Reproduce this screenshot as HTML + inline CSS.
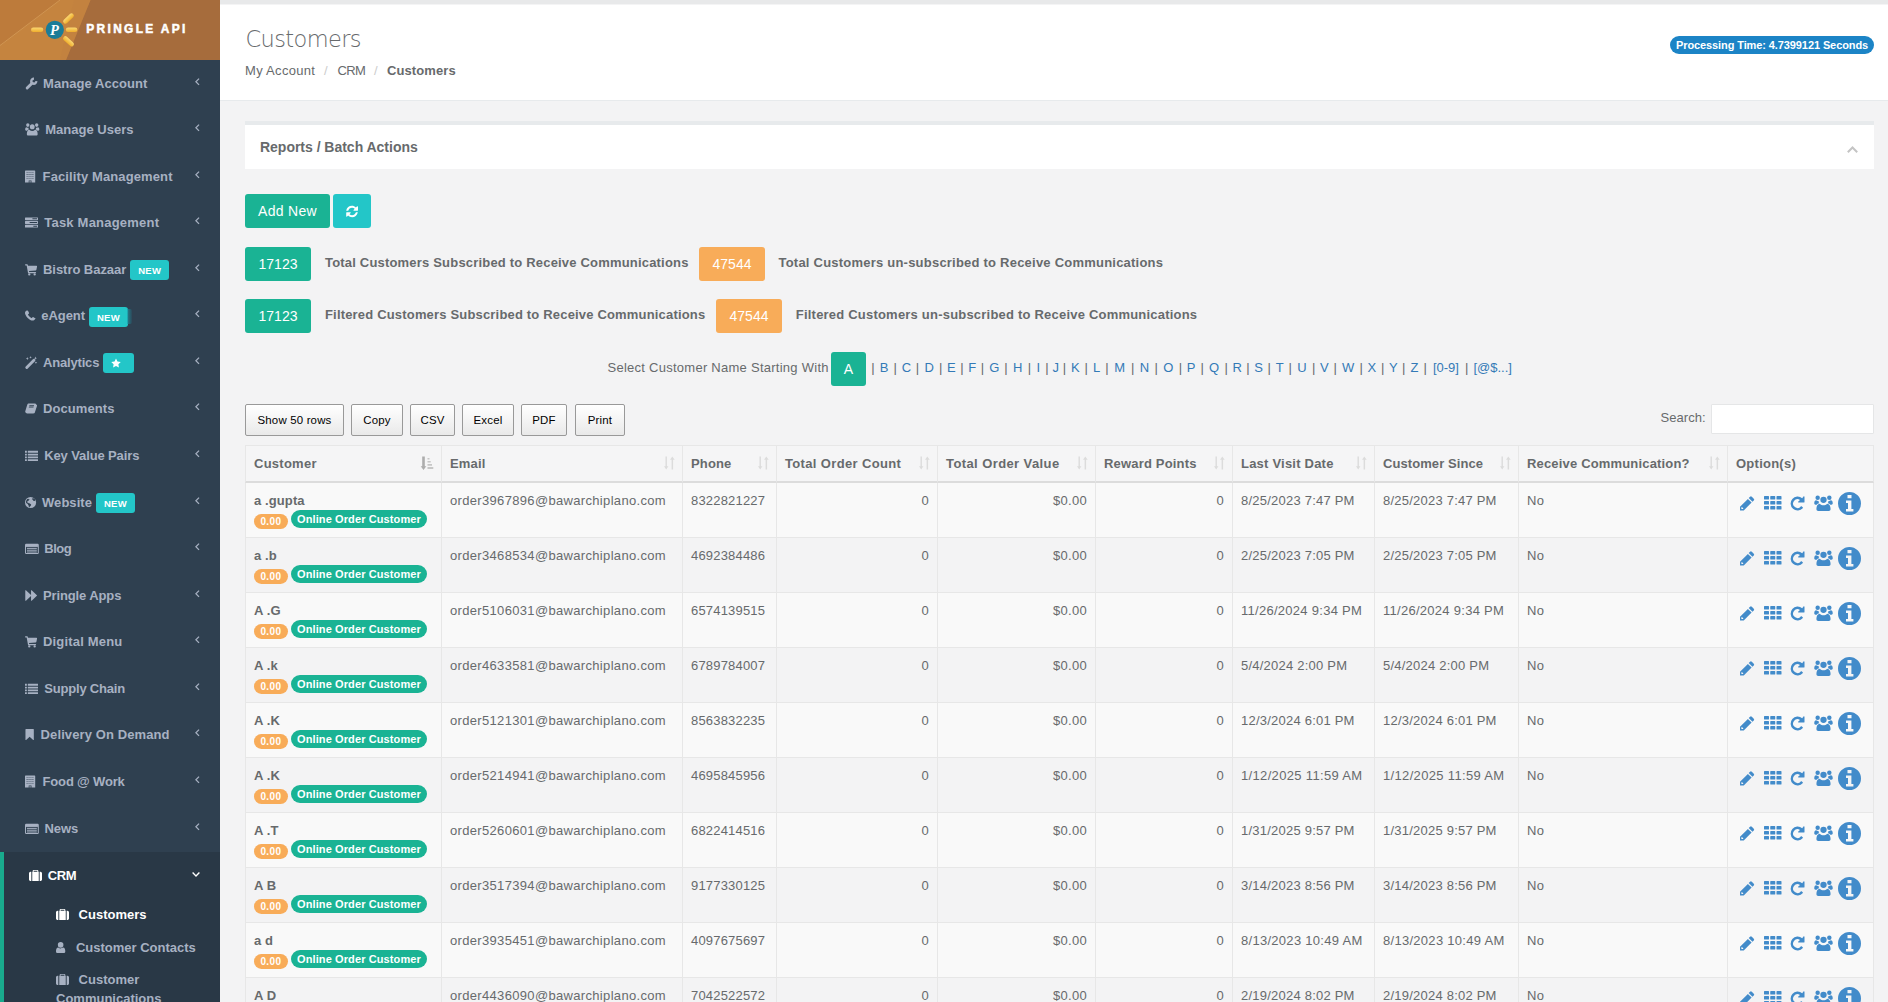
<!DOCTYPE html>
<html lang="en"><head><meta charset="utf-8"><title>Customers</title>
<style>
*{box-sizing:border-box}
html,body{margin:0;padding:0}
body{width:1888px;height:1002px;overflow:hidden;background:#f3f3f4;font:13px/18.5714px "Liberation Sans",sans-serif;color:#676a6c;position:relative}
svg{display:inline-block;fill:currentColor;overflow:visible}
a{text-decoration:none;color:inherit}
b,strong,th{font-weight:bold}
.abs{position:absolute}
/* sidebar */
#side{position:absolute;left:0;top:0;width:220px;height:1002px;background:#2f4050;overflow:hidden}
#logo{position:absolute;left:0;top:0;width:220px;height:60px;background:#a66c3c;overflow:hidden}
#logo .brand{-webkit-text-stroke:.5px #fff;position:absolute;left:86.3px;top:19.7px;font:bold 11.9px/18px "Liberation Sans",sans-serif;color:#fff;letter-spacing:2.34px;white-space:nowrap}
#nav{position:absolute;left:0;top:60px;width:220px;list-style:none;margin:0;padding:0}
#nav li{display:block;margin:0;padding:0}
#nav>li>a{display:block;height:46.5714px;padding:14.5px 20px 13.5px 25px;color:#a7b1c2;font-weight:bold;white-space:nowrap;letter-spacing:.05px}
#nav .ib{display:inline-block}
#nav .ic{height:13px;vertical-align:-2px}
#nav .arr{float:right;width:4.6px;height:7.4px;margin-top:3px;stroke:currentColor;fill:none;stroke-width:1.35}
#nav>li>a{position:relative}
#nav .lbl{position:absolute;top:14px;width:38.9px;text-align:center;background:#23c6c8;color:#fff;font:bold 9.5px/22px "Liberation Sans",sans-serif;height:19.8px;border-radius:3px;letter-spacing:.3px;text-indent:.3px;overflow:hidden}
#nav .gh{position:absolute;top:16.5px;width:4.5px;height:14.5px;border-radius:0 2px 2px 0;background:linear-gradient(90deg,rgba(30,150,165,.75),rgba(30,120,140,.15))}
#nav li.act{border-left:4px solid #19aa8d;background:#293846}
#nav li.act>a{color:#fff;padding-left:24.5px;padding-top:15.2px;padding-bottom:12.8px}
#nav ul{list-style:none;margin:0;padding:0}
#nav ul li a{display:block;padding:8.2px 10px 5.8px 52px;color:#a7b1c2;font-weight:bold}
#nav ul li.on a{color:#fff}
/* header */
#strip{position:absolute;left:220px;top:0;width:1668px;height:5px;background:linear-gradient(#e8e9ea 0,#e8e9ea 4px,#f4f4f5 4px)}
#head{position:absolute;left:220px;top:5px;width:1668px;height:96px;background:#fff;border-bottom:1px solid #e7eaec}
#head h2{position:absolute;left:25.5px;top:17.2px;margin:0;font:200 22.5px/34px "DejaVu Sans Light","DejaVu Sans","Liberation Sans",sans-serif;color:#676a6c;letter-spacing:-.62px}
#crumb{position:absolute;left:25px;top:57px;white-space:nowrap;line-height:18.5714px}
#crumb span{position:absolute;top:0}
#ptime{position:absolute;left:1670px;top:36px;width:204px;height:17.5px;border-radius:9px;background:#1c84c6;color:#fff;font:bold 11px/18.6px "Liberation Sans",sans-serif;text-align:center;white-space:nowrap;letter-spacing:-.1px}
/* ibox */
#ibox{position:absolute;left:245px;top:121px;width:1629px;height:48px;background:#fff;border-top:4px solid #e7eaec}
#ibox h5{position:absolute;left:15px;top:11.7px;margin:0;font:bold 14px/20px "Liberation Sans",sans-serif;color:#676a6c;letter-spacing:-.02px}
.btn{position:absolute;height:34px;border-radius:3px;color:#fff;font:14px/34px "Liberation Sans",sans-serif;text-align:center;white-space:nowrap}
.g{background:#1ab394}.o{background:#f8ac59}.c{background:#23c6c8}
.lab{position:absolute;font-weight:bold;white-space:nowrap;line-height:18.5714px;margin-top:1px}
.dtb{position:absolute;top:404px;height:32px;border:1px solid #999;border-radius:2px;background:linear-gradient(#fff,#e9e9e9);color:#000;font:11.44px/30px "Liberation Sans",sans-serif;text-align:center;letter-spacing:.18px;white-space:nowrap}
#search{position:absolute;left:1711px;top:404px;width:163px;height:30px;background:#fff;border:1px solid #e5e6e7;border-radius:1px}
#alpha .pp{display:inline-block;width:13.93px;text-align:center;color:#676a6c}
#alpha a{display:inline-flex;justify-content:center;color:#337ab7}
/* table */
#tbl{position:absolute;left:245px;top:445px;width:1629px;border-collapse:separate;border-spacing:0;table-layout:fixed}
#tbl th,#tbl td{border:0 solid #e7e7e7;border-left-width:1px;padding:8px;vertical-align:top;text-align:left;line-height:18.5714px;white-space:nowrap;overflow:hidden}
#tbl th:last-child,#tbl td:last-child{border-right-width:1px}
#tbl th{background:#f5f5f6;height:38px;padding-top:8.6px;padding-bottom:6.5px;border-top-width:1px;border-bottom:2px solid #dcdcdc;position:relative;letter-spacing:.1px}
#tbl td{height:55px;border-bottom-width:1px;letter-spacing:.3px;padding-top:8.7px;padding-bottom:7.3px}
#tbl tr.od td{background:#f9f9f9}
#tbl td.r{text-align:right}
#tbl td.nm{letter-spacing:.1px}
.nmw{position:relative;height:38px}
.bz{position:absolute;left:0;top:22.4px;background:#f8ac59;color:#fff;font:bold 10px/16.4px "Liberation Sans",sans-serif;height:14.8px;width:33.5px;border-radius:7.4px;text-align:center;letter-spacing:.4px;text-indent:.4px}
.bo{position:absolute;left:37px;top:18.1px;background:#1ab394;color:#fff;font:bold 11px/19.6px "Liberation Sans",sans-serif;height:18px;width:136px;border-radius:9px;text-align:center;letter-spacing:.11px}
.srt{position:absolute;right:7.500px;top:10px;width:11px;height:14px;fill:#dcdcdc}
.opt{color:#428bca}
.opt svg{position:absolute}
td.op{position:relative}
</style></head>
<body>
<div id="side"><div id="logo">
<svg class="abs" style="left:0;top:0" width="220" height="60" viewBox="0 0 220 60">
<defs><linearGradient id="ry" x1="0" y1="0" x2="0" y2="1"><stop offset="0" stop-color="#fbd873"/><stop offset="1" stop-color="#efae2c"/></linearGradient></defs>
<polygon points="0,0 90.500,0 66,60 0,60" fill="#c5843f"/>
<polygon points="0,0 60,0 0,45.500" fill="#bd7b3b"/>
<path d="M0 45.500 60 0" stroke="#d39a58" stroke-width=".8" fill="none"/>
<polygon points="74,0 90.500,0 66,60 60,60" fill="#c08040" opacity=".45"/>
<g fill="url(#ry)"><rect x="31" y="27.400" width="12.300" height="4.600" rx="2.300"/><rect x="65.800" y="27.400" width="11.600" height="4.600" rx="2.300"/>
<rect x="62" y="16.200" width="13" height="4.600" rx="2.300" transform="rotate(-44 68.500 18.500)"/><rect x="62" y="39" width="13" height="4.600" rx="2.300" transform="rotate(42 68.500 41.300)"/></g>
<circle cx="54.800" cy="29.800" r="9.100" fill="#1b7c98"/>
<text x="50" y="35" font-family="Liberation Serif, serif" font-style="italic" font-weight="bold" font-size="14.500" fill="#fff">P</text>
</svg>
<div class="brand">PRINGLE API</div></div><ul id="nav"><li><a><span class="ib" style="width:18.00px"><svg class="ic" style="width:12.07px" viewBox="0 0 13 14"><path d="M2.300 11.900 7.800 6.400" fill="none" stroke="currentColor" stroke-width="3.100" stroke-linecap="round"/><path d="M12.090 4.370A2.700 2.700 0 1 1 9.630 1.910" fill="none" stroke="currentColor" stroke-width="2.500"/></svg></span><span style="letter-spacing:0.062px">Manage Account</span><svg class="arr" viewBox="0 0 5 8"><path d="M4.4.6 1 4l3.400 3.400"/></svg></a></li><li><a><span class="ib" style="width:20.25px"><svg class="ic" style="width:13.93px;height:14.5px;width:14.500px;vertical-align:-2.5px" viewBox="0 0 15 14" preserveAspectRatio="none"><circle cx="7.5" cy="4.6" r="2.5"/><path d="M3.4 13.1c-.9 0-1.5-.6-1.5-1.5 0-2.300.9-4.200 2.700-4.200.8.800 1.800 1.200 2.900 1.200s2.100-.4 2.900-1.200c1.800 0 2.700 1.900 2.700 4.200 0 .9-.6 1.500-1.500 1.500z"/><circle cx="2.9" cy="3.000" r="1.750"/><circle cx="12.100" cy="3.000" r="1.750"/><path d="M.2 7.300C.2 5.800.8 5 1.700 5c.5.400 1.200.600 1.900.500A3.500 3.500 0 0 0 4 7.200c-.9.100-1.500.600-1.900 1.200H1.200C.6 8.400.2 8 .2 7.300zM14.800 7.300c0-1.500-.6-2.300-1.500-2.300-.5.400-1.200.600-1.900.500a3.500 3.500 0 0 1-.4 1.700c.9.100 1.500.600 1.900 1.200h.9c.6 0 1-.4 1-1.100z"/></svg></span><span style="letter-spacing:0.012px">Manage Users</span><svg class="arr" viewBox="0 0 5 8"><path d="M4.4.6 1 4l3.400 3.400"/></svg></a></li><li><a><span class="ib" style="width:17.60px"><svg class="ic" style="width:10.21px" viewBox="0 0 11 14"><path fill-rule="evenodd" d="M.6.500h9.800c.3 0 .6.300.6.600V13.500H7v-2.200H4v2.200H0V1.100C0 .8.300.5.600.5zM1.800 2.300v.9h.9v-.9zm2.100 0v.9h.9v-.9zm2.100 0v.9h.9v-.9zm2.100 0v.9h.9v-.9zM1.800 4.400v.9h.9v-.9zm2.100 0v.9h.9v-.9zm2.100 0v.9h.9v-.9zm2.100 0v.9h.9v-.9zM1.800 6.500v.9h.9v-.9zm2.100 0v.9h.9v-.9zm2.100 0v.9h.9v-.9zm2.100 0v.9h.9v-.9zM1.800 8.600v.9h.9v-.9zm2.100 0v.9h.9v-.9zm2.100 0v.9h.9v-.9zm2.100 0v.9h.9v-.9z"/><path d="M4.500 11.800h2v1.700h-2z" opacity=".55"/></svg></span><span style="letter-spacing:0.112px">Facility Management</span><svg class="arr" viewBox="0 0 5 8"><path d="M4.4.6 1 4l3.400 3.400"/></svg></a></li><li><a><span class="ib" style="width:19.25px"><svg class="ic" style="width:13.00px" viewBox="0 0 14 14"><path fill-rule="evenodd" d="M.5 1.500h13c.3 0 .5.200.5.500v2c0 .3-.2.500-.5.500H.5C.2 4.500 0 4.300 0 4V2c0-.3.200-.5.500-.5zM8 2.500v1h5v-1zM.5 5.500h13c.3 0 .5.200.5.500v2c0 .3-.2.500-.5.500H.5C.2 8.500 0 8.300 0 8V6c0-.3.200-.5.500-.5zM5 6.500v1h8v-1zM.5 9.500h13c.3 0 .5.200.5.500v2c0 .3-.2.500-.5.500H.5c-.3 0-.5-.2-.5-.5v-2c0-.3.200-.5.500-.5zM9 10.500v1h4v-1z"/></svg></span><span style="letter-spacing:0.217px">Task Management</span><svg class="arr" viewBox="0 0 5 8"><path d="M4.4.6 1 4l3.400 3.400"/></svg></a></li><li><a><span class="ib" style="width:18.00px"><svg class="ic" style="width:12.07px" viewBox="0 0 13 14"><path d="M.6 1.300h1.700c.4 0 .6.200.700.600L3.200 3H12.300c.5 0 .8.400.7.900l-.7 3.400c-.1.400-.4.700-.8.700L4.300 8.600l.2 1h6.800c.4 0 .7.300.7.700s-.3.700-.7.700H3.900c-.4 0-.6-.200-.700-.600L1.800 2.700H.6C.2 2.700 0 2.400 0 2s.2-.7.600-.7z"/><circle cx="4.600" cy="12.300" r="1.250"/><circle cx="10.400" cy="12.300" r="1.250"/></svg></span><span style="letter-spacing:-0.043px">Bistro Bazaar</span><span class="lbl" style="left:130.15px">NEW</span><svg class="arr" viewBox="0 0 5 8"><path d="M4.4.6 1 4l3.400 3.400"/></svg></a></li><li><a><span class="ib" style="width:16.25px"><svg class="ic" style="width:10.21px" viewBox="0 0 11 14"><path d="M11 10.300c0 .3-.1.900-.3 1.300-.3.700-1.500 1.400-2.500 1.400-1.400 0-3.600-1.200-5.300-2.900S0 6.200 0 4.800c0-1 .7-2.200 1.400-2.500.4-.2 1-.3 1.200-.3.300 0 .4.200.6.500l1.100 2c.2.400.1.700-.2 1l-.7.700c-.2.200-.2.400-.1.600.9 1.600 1.900 2.600 3.500 3.500.2.100.4.100.6-.1l.8-.8c.3-.3.600-.3.900-.1l1.900 1.100c.3.200.5.300.5.500 0 .1 0 .3-.500.400z" transform="translate(0 -.5)"/></svg></span><span style="letter-spacing:-0.052px">eAgent</span><span class="lbl" style="left:88.90px">NEW</span><span class="gh" style="left:127.30px"></span><svg class="arr" viewBox="0 0 5 8"><path d="M4.4.6 1 4l3.400 3.400"/></svg></a></li><li><a><span class="ib" style="width:18.00px"><svg class="ic" style="width:12.07px" viewBox="0 0 13 14"><path d="M1.900 12.300 9.600 4.600" fill="none" stroke="currentColor" stroke-width="3.100" stroke-linecap="round"/><path d="M2.500 1.200l.5 1.100 1.100.5-1.100.5-.5 1.100L2 3.300.9 2.800 2 2.300zM6 0l.4 1 1 .4-1 .4-.4 1-.4-1-1-.4 1-.4zM11.800 5.800l.4 1 1 .4-1 .4-.4 1-.4-1-1-.4 1-.4zM11.300.6l.5 1.200 1.200.5-1.200.5-.5 1.200-.5-1.200-1.200-.5 1.200-.5z"/></svg></span><span style="letter-spacing:-0.174px">Analytics</span><span class="lbl" style="left:103.15px;width:31px"><svg viewBox="0 0 13 13" style="width:10px;height:10px;margin:4.5px 0 0 8px;display:block"><path d="M6.500.5 8.400 4.500l4.300.6-3.100 3 .700 4.300L6.500 10.400 2.700 12.400l.700-4.300L.3 5.100l4.300-.6z"/></svg></span><svg class="arr" viewBox="0 0 5 8"><path d="M4.4.6 1 4l3.400 3.400"/></svg></a></li><li><a><span class="ib" style="width:18.00px"><svg class="ic" style="width:12.07px" viewBox="0 0 13 14"><path fill-rule="evenodd" d="M12.800 4.200c.2.300.2.700.1 1l-2.300 7.100c-.2.600-.9 1-1.500 1H2.300c-.8 0-1.700-.6-2-1.400-.1-.4-.1-.700 0-1l2.200-7.200C2.700 3 3.400 2.500 4 2.500h6.500c.8 0 1.200.300 1.500.700.200.3.300.7.300 1h.1c.2 0 .3 0 .4 0zM4.800 5.500h4.500c.1 0 .2-.100.3-.200l.1-.500c0-.100 0-.200-.2-.200H5c-.1 0-.2.100-.3.200l-.1.500c0 .100 0 .200.200.200zM4.300 7h4.500c.1 0 .2-.100.3-.200l.1-.5c0-.100 0-.200-.2-.200H4.500c-.1 0-.2.100-.3.200l-.1.500c0 .100 0 .200.200.200z" transform="translate(0 -1)"/></svg></span><span style="letter-spacing:0.078px">Documents</span><svg class="arr" viewBox="0 0 5 8"><path d="M4.4.6 1 4l3.400 3.400"/></svg></a></li><li><a><span class="ib" style="width:19.25px"><svg class="ic" style="width:13.00px" viewBox="0 0 14 14"><path d="M0 2.300c0-.2.100-.3.300-.3h1.400c.2 0 .3.100.3.300v1.400c0 .2-.1.300-.3.300H.3C.1 4 0 3.900 0 3.700zm3 0c0-.2.100-.3.300-.3h10.400c.2 0 .3.100.3.300v1.400c0 .2-.1.300-.3.300H3.300c-.2 0-.3-.1-.3-.3zM0 5.300C0 5.100.1 5 .3 5h1.400c.2 0 .3.100.3.300v1.400c0 .2-.1.300-.3.300H.3C.1 7 0 6.900 0 6.700zm3 0c0-.2.100-.3.300-.3h10.400c.2 0 .3.100.3.300v1.400c0 .2-.1.300-.3.300H3.300C3.100 7 3 6.900 3 6.700zM0 8.300C0 8.100.1 8 .3 8h1.400c.2 0 .3.100.3.300v1.400c0 .2-.1.300-.3.300H.3C.1 10 0 9.900 0 9.700zm3 0c0-.2.100-.3.300-.3h10.400c.2 0 .3.100.3.300v1.400c0 .2-.1.300-.3.300H3.300c-.2 0-.3-.1-.3-.3zM0 11.300c0-.2.100-.3.300-.3h1.400c.2 0 .3.100.3.300v1.400c0 .2-.1.300-.3.300H.3c-.2 0-.3-.1-.3-.3zm3 0c0-.2.100-.3.300-.3h10.400c.2 0 .3.100.3.300v1.400c0 .2-.1.300-.3.300H3.300c-.2 0-.3-.1-.3-.3z"/></svg></span><span style="letter-spacing:-0.123px">Key Value Pairs</span><svg class="arr" viewBox="0 0 5 8"><path d="M4.4.6 1 4l3.400 3.400"/></svg></a></li><li><a><span class="ib" style="width:17.00px"><svg class="ic" style="width:11.14px" viewBox="0 0 12 14"><path fill-rule="evenodd" d="M6 1a6 6 0 1 1 0 12A6 6 0 0 1 6 1zM1.700 4.400c-.5.900-.7 1.900-.6 3 .5.600 1.300 1.100 1.900 1.300.2.600.3 1.100.9 1.500.2.700.1 1.300.5 1.900.3.100.6-.200.900-.700.500-.700 1.400-1.300 1.300-2.300-.8-.5-1.500-1.200-2.500-1.200-.6-.3-.9-.8-1.600-.8-.300-.5.200-.9-.2-1.300.4-.3.700-.1 1-.5.600-.5 1.300-.8 1.700-1.500-.3-.5-.8-.3-1.200-.7-.7-.3-1.500.1-2.100 1.300zM8.500 2.500c-.4.300-1 .300-1.100.900.3.500.9.300 1.400.600.200.500-.1 1 .400 1.400.6.200.9-.400 1.500-.400.2.300.2.700.1 1.100.3-.8.300-1.700-.1-2.500-.5-.6-1.300-1-2.200-1.100z"/></svg></span><span style="letter-spacing:0.056px">Website</span><span class="lbl" style="left:95.90px">NEW</span><svg class="arr" viewBox="0 0 5 8"><path d="M4.4.6 1 4l3.400 3.400"/></svg></a></li><li><a><span class="ib" style="width:19.25px"><svg class="ic" style="width:13.80px" viewBox="0 0 16 14" preserveAspectRatio="none"><rect x=".6" y="2.600" width="14.800" height="9.800" rx=".8" fill="none" stroke="currentColor" stroke-width="1.200"/><rect x="1" y="3" width="14" height="2.300"/><rect x="2.300" y="6.300" width="11.400" height="1.100"/><rect x="2.300" y="8.300" width="11.400" height="1.100"/><rect x="2.300" y="10.200" width="11.400" height="1.100"/></svg></span><span style="letter-spacing:-0.473px">Blog</span><svg class="arr" viewBox="0 0 5 8"><path d="M4.4.6 1 4l3.400 3.400"/></svg></a></li><li><a><span class="ib" style="width:18.00px"><svg class="ic" style="width:13.00px" viewBox="0 0 14 14"><path d="M.3 1.700c0-.4.4-.6.7-.3L6.500 6.500V1.700c0-.4.4-.6.7-.3l5.600 5.200c.2.200.2.600 0 .8L7.200 12.600c-.3.300-.7.100-.7-.3V7.500L1 12.600c-.3.300-.7.100-.7-.3z"/></svg></span><span style="letter-spacing:-0.121px">Pringle Apps</span><svg class="arr" viewBox="0 0 5 8"><path d="M4.4.6 1 4l3.400 3.400"/></svg></a></li><li><a><span class="ib" style="width:18.00px"><svg class="ic" style="width:12.07px" viewBox="0 0 13 14"><path d="M.6 1.300h1.700c.4 0 .6.200.700.600L3.200 3H12.300c.5 0 .8.400.7.900l-.7 3.400c-.1.400-.4.700-.8.700L4.300 8.600l.2 1h6.800c.4 0 .7.300.7.700s-.3.700-.7.700H3.900c-.4 0-.6-.200-.700-.600L1.800 2.700H.6C.2 2.700 0 2.400 0 2s.2-.7.600-.7z"/><circle cx="4.600" cy="12.300" r="1.250"/><circle cx="10.400" cy="12.300" r="1.250"/></svg></span><span style="letter-spacing:0.185px">Digital Menu</span><svg class="arr" viewBox="0 0 5 8"><path d="M4.4.6 1 4l3.400 3.400"/></svg></a></li><li><a><span class="ib" style="width:19.25px"><svg class="ic" style="width:13.00px" viewBox="0 0 14 14"><path d="M0 2.300c0-.2.100-.3.300-.3h1.400c.2 0 .3.100.3.300v1.400c0 .2-.1.300-.3.300H.3C.1 4 0 3.900 0 3.700zm3 0c0-.2.100-.3.300-.3h10.400c.2 0 .3.100.3.300v1.400c0 .2-.1.300-.3.300H3.300c-.2 0-.3-.1-.3-.3zM0 5.300C0 5.100.1 5 .3 5h1.400c.2 0 .3.100.3.300v1.400c0 .2-.1.300-.3.300H.3C.1 7 0 6.900 0 6.700zm3 0c0-.2.100-.3.300-.3h10.400c.2 0 .3.100.3.300v1.400c0 .2-.1.300-.3.300H3.300C3.100 7 3 6.900 3 6.700zM0 8.300C0 8.100.1 8 .3 8h1.400c.2 0 .3.100.3.300v1.400c0 .2-.1.300-.3.300H.3C.1 10 0 9.900 0 9.700zm3 0c0-.2.100-.3.300-.3h10.400c.2 0 .3.100.3.300v1.400c0 .2-.1.300-.3.300H3.300c-.2 0-.3-.1-.3-.3zM0 11.300c0-.2.100-.3.300-.3h1.400c.2 0 .3.100.3.300v1.400c0 .2-.1.300-.3.300H.3c-.2 0-.3-.1-.3-.3zm3 0c0-.2.100-.3.300-.3h10.400c.2 0 .3.100.3.300v1.400c0 .2-.1.300-.3.300H3.300c-.2 0-.3-.1-.3-.3z"/></svg></span><span style="letter-spacing:-0.193px">Supply Chain</span><svg class="arr" viewBox="0 0 5 8"><path d="M4.4.6 1 4l3.400 3.400"/></svg></a></li><li><a><span class="ib" style="width:15.60px"><svg class="ic" style="width:9.29px" viewBox="0 0 10 14"><path d="M1 1h8c.3 0 .5.200.5.500v11.100c0 .4-.4.600-.7.300L5 9.300 1.200 12.900c-.3.300-.7.100-.7-.3V1.500C.5 1.200.7 1 1 1z"/></svg></span><span style="letter-spacing:0.102px">Delivery On Demand</span><svg class="arr" viewBox="0 0 5 8"><path d="M4.4.6 1 4l3.400 3.400"/></svg></a></li><li><a><span class="ib" style="width:17.60px"><svg class="ic" style="width:10.21px" viewBox="0 0 11 14"><path fill-rule="evenodd" d="M.6.500h9.800c.3 0 .6.300.6.600V13.500H7v-2.200H4v2.200H0V1.100C0 .8.300.5.600.5zM1.800 2.300v.9h.9v-.9zm2.100 0v.9h.9v-.9zm2.100 0v.9h.9v-.9zm2.100 0v.9h.9v-.9zM1.800 4.400v.9h.9v-.9zm2.100 0v.9h.9v-.9zm2.100 0v.9h.9v-.9zm2.100 0v.9h.9v-.9zM1.800 6.500v.9h.9v-.9zm2.100 0v.9h.9v-.9zm2.100 0v.9h.9v-.9zm2.100 0v.9h.9v-.9zM1.800 8.600v.9h.9v-.9zm2.100 0v.9h.9v-.9zm2.100 0v.9h.9v-.9zm2.100 0v.9h.9v-.9z"/><path d="M4.500 11.800h2v1.700h-2z" opacity=".55"/></svg></span><span style="letter-spacing:-0.176px">Food @ Work</span><svg class="arr" viewBox="0 0 5 8"><path d="M4.4.6 1 4l3.400 3.400"/></svg></a></li><li><a><span class="ib" style="width:19.40px"><svg class="ic" style="width:13.80px" viewBox="0 0 16 14" preserveAspectRatio="none"><rect x=".6" y="2.600" width="14.800" height="9.800" rx=".8" fill="none" stroke="currentColor" stroke-width="1.200"/><rect x="1" y="3" width="14" height="2.300"/><rect x="2.300" y="6.300" width="11.400" height="1.100"/><rect x="2.300" y="8.300" width="11.400" height="1.100"/><rect x="2.300" y="10.200" width="11.400" height="1.100"/></svg></span><span style="letter-spacing:-0.017px">News</span><svg class="arr" viewBox="0 0 5 8"><path d="M4.4.6 1 4l3.400 3.400"/></svg></a></li><li class="act"><a><span class="ib" style="width:19.20px"><svg class="ic" style="width:13.00px" viewBox="0 0 14 14"><path fill-rule="evenodd" d="M4 3V1.800C4 1.300 4.300 1 4.800 1h4.400c.5 0 .8.300.8.800V3h.5v10h-7V3zm1 0h4V2H5zM2.500 3v10H1.700C.8 13 0 12.200 0 11.300V4.700C0 3.800.8 3 1.700 3zm9 0h.8c.9 0 1.700.8 1.700 1.700v6.600c0 .9-.8 1.700-1.700 1.700h-.8z"/></svg></span><span style="letter-spacing:-.4px">CRM</span><svg class="arr" style="width:8px;height:5px;margin-top:5px" viewBox="0 0 8 5"><path d="M.6.6 4 4 7.400.6"/></svg></a><ul><li class="on"><a><span class="ib" style="width:22.60px"><svg class="ic" style="width:13.00px" viewBox="0 0 14 14"><path fill-rule="evenodd" d="M4 3V1.800C4 1.300 4.300 1 4.800 1h4.400c.5 0 .8.300.8.800V3h.5v10h-7V3zm1 0h4V2H5zM2.500 3v10H1.700C.8 13 0 12.200 0 11.300V4.700C0 3.800.8 3 1.700 3zm9 0h.8c.9 0 1.700.8 1.700 1.700v6.600c0 .9-.8 1.700-1.700 1.700h-.8z"/></svg></span>Customers</a></li><li><a><span class="ib" style="width:19.90px"><svg class="ic" style="width:9.29px" viewBox="0 0 10 14"><circle cx="5" cy="4.200" r="3"/><path d="M1.800 13C.8 13 0 12.400 0 11.300 0 9.300.5 7 2.500 7 3 7.500 4 8 5 8s2-.5 2.500-1C9.500 7 10 9.300 10 11.300c0 1.100-.8 1.700-1.800 1.700z"/></svg></span>Customer Contacts</a></li><li><a><span class="ib" style="width:22.60px"><svg class="ic" style="width:13.00px" viewBox="0 0 14 14"><path fill-rule="evenodd" d="M4 3V1.800C4 1.300 4.300 1 4.800 1h4.400c.5 0 .8.300.8.800V3h.5v10h-7V3zm1 0h4V2H5zM2.500 3v10H1.700C.8 13 0 12.200 0 11.300V4.700C0 3.800.8 3 1.700 3zm9 0h.8c.9 0 1.700.8 1.700 1.700v6.600c0 .9-.8 1.700-1.700 1.700h-.8z"/></svg></span>Customer Communications</a></li></ul></li></ul></div>
<div id="strip"></div>
<div id="head">
<h2>Customers</h2>
<div id="crumb"><span style="left:0;letter-spacing:.3px">My Account</span><span style="left:79px;color:#ccc">/</span><span style="left:92.5px;letter-spacing:-.7px">CRM</span><span style="left:129px;color:#ccc">/</span><span style="left:142px;font-weight:bold;letter-spacing:.1px">Customers</span></div>
<div id="ptime" style="left:1450px;top:31px">Processing Time: 4.7399121 Seconds</div>
</div>
<div id="ibox"><h5>Reports / Batch Actions</h5>
<svg class="abs" style="left:1602px;top:20.500px;width:11px;height:7px;fill:none;stroke:#c4c4c4;stroke-width:2" viewBox="0 0 11 7"><path d="M.8 6.200 5.500 1.500l4.700 4.700"/></svg></div>
<div class="btn g" style="left:245px;top:194px;width:85px;letter-spacing:.3px">Add New</div>
<div class="btn c" style="left:333px;top:194px;width:38px"><svg style="width:12px;height:13px;margin-top:10.500px" viewBox="0 0 12 13"><path d="M11.700 7.700c-.600 2.600-2.800 4.500-5.600 4.500-1.500 0-2.900-.6-4-1.600l-1 1c-.3.300-.9.100-.9-.4V7.700c0-.3.200-.5.500-.5h3.500c.5 0 .7.600.4.900L3.500 9.200c.7.700 1.600 1 2.600 1 1.400 0 2.600-.7 3.300-1.900.2-.3.3-.6.400-.900 0-.1.100-.2.300-.2h1.500c.2 0 .3.200.2.500zM12 1.800v3.500c0 .3-.2.500-.5.500H8c-.5 0-.7-.6-.4-.9l1.100-1.100A4 4 0 0 0 6 2.800c-1.400 0-2.600.7-3.300 1.900-.2.300-.3.600-.4.900 0 .1-.1.200-.3.200H.4c-.2 0-.3-.2-.2-.400C.8 2.700 3.100.8 5.900.8c1.500 0 2.900.6 4 1.600l1-1c.4-.3 1.100-.1 1.100.4z"/></svg></div>

<div class="btn g" style="left:245px;top:247px;width:66px">17123</div>
<div class="lab" style="left:325px;top:253px;letter-spacing:0.19px">Total Customers Subscribed to Receive Communications</div>
<div class="btn o" style="left:699px;top:247px;width:66px">47544</div>
<div class="lab" style="left:778.500px;top:253px;letter-spacing:0.222px">Total Customers un-subscribed to Receive Communications</div>

<div class="btn g" style="left:245px;top:299px;width:66px">17123</div>
<div class="lab" style="left:325px;top:305px;letter-spacing:0.178px">Filtered Customers Subscribed to Receive Communications</div>
<div class="btn o" style="left:716px;top:299px;width:66px">47544</div>
<div class="lab" style="left:795.800px;top:305px;letter-spacing:0.209px">Filtered Customers un-subscribed to Receive Communications</div>

<div class="abs" style="left:607.500px;top:358.7px;white-space:nowrap;letter-spacing:.26px">Select Customer Name Starting With</div>
<div class="btn g" style="left:831px;top:352px;width:35px">A</div>
<div class="abs" id="alpha" style="left:866px;top:358.7px;white-space:nowrap"><span class="pp">|</span><a style="width:8.42px">B</a><span class="pp">|</span><a style="width:8.20px">C</a><span class="pp">|</span><a style="width:9.48px">D</a><span class="pp">|</span><a style="width:7.23px">E</a><span class="pp">|</span><a style="width:6.71px">F</a><span class="pp">|</span><a style="width:9.46px">G</a><span class="pp">|</span><a style="width:9.59px">H</a><span class="pp">|</span><a style="width:3.62px">I</a><span class="pp">|</span><a style="width:3.47px">J</a><span class="pp">|</span><a style="width:7.98px">K</a><span class="pp">|</span><a style="width:6.75px">L</a><span class="pp">|</span><a style="width:11.74px">M</a><span class="pp">|</span><a style="width:9.80px">N</a><span class="pp">|</span><a style="width:10.12px">O</a><span class="pp">|</span><a style="width:7.83px">P</a><span class="pp">|</span><a style="width:10.12px">Q</a><span class="pp">|</span><a style="width:8.04px">R</a><span class="pp">|</span><a style="width:7.13px">S</a><span class="pp">|</span><a style="width:7.19px">T</a><span class="pp">|</span><a style="width:9.46px">U</a><span class="pp">|</span><a style="width:7.74px">V</a><span class="pp">|</span><a style="width:12.04px">W</a><span class="pp">|</span><a style="width:7.50px">X</a><span class="pp">|</span><a style="width:7.28px">Y</a><span class="pp">|</span><a style="width:7.42px">Z</a><span class="pp">|</span><a style="width:27.60px">[0-9]</a><span class="pp">|</span><a style="width:38.04px">[@$...]</a></div>

<div class="dtb" style="left:245px;width:99px">Show 50 rows</div><div class="dtb" style="left:351px;width:52px">Copy</div><div class="dtb" style="left:410px;width:45px">CSV</div><div class="dtb" style="left:462px;width:52px">Excel</div><div class="dtb" style="left:521px;width:46px">PDF</div><div class="dtb" style="left:575px;width:50px">Print</div>
<div class="abs" style="left:1660.500px;top:408.5px;letter-spacing:.05px">Search:</div>
<div id="search"></div>
<table id="tbl"><colgroup><col style="width:196px"><col style="width:241px"><col style="width:94px"><col style="width:161px"><col style="width:158px"><col style="width:137px"><col style="width:142px"><col style="width:144px"><col style="width:209px"><col style="width:147px"></colgroup><thead><tr><th style="letter-spacing:0.258px">Customer<svg class="srt" style="width:13px;right:7.500px" viewBox="0 0 13 14"><path fill="#adadad" d="M2.500 14 -.3 10.200h1.500V.5h2.600v9.700h1.500z"/><path fill="#c6c6c6" d="M6.500 13v-2h5.800v2zM6.500 9.800V8h4.500v1.800zM6.500 6.600V5h3.200v1.600zM6.500 3.400V2h2v1.400z"/></svg></th><th style="letter-spacing:0.163px">Email<svg class="srt" viewBox="0 0 11 14"><path d="M2.200 13.400 0 10.200h1.500V.6h1.400v9.600h1.500zM8.300.6l2.400 3.200H9.100v9.600H7.600V3.800H6z"/></svg></th><th style="letter-spacing:0.153px">Phone<svg class="srt" viewBox="0 0 11 14"><path d="M2.200 13.400 0 10.200h1.500V.6h1.400v9.600h1.500zM8.300.6l2.400 3.200H9.100v9.600H7.600V3.800H6z"/></svg></th><th style="letter-spacing:0.349px">Total Order Count<svg class="srt" viewBox="0 0 11 14"><path d="M2.200 13.400 0 10.200h1.500V.6h1.400v9.600h1.500zM8.300.6l2.400 3.200H9.100v9.600H7.600V3.800H6z"/></svg></th><th style="letter-spacing:0.407px">Total Order Value<svg class="srt" viewBox="0 0 11 14"><path d="M2.200 13.400 0 10.200h1.500V.6h1.400v9.600h1.500zM8.300.6l2.400 3.200H9.100v9.600H7.600V3.800H6z"/></svg></th><th style="letter-spacing:0.177px">Reward Points<svg class="srt" viewBox="0 0 11 14"><path d="M2.200 13.400 0 10.200h1.500V.6h1.400v9.600h1.500zM8.300.6l2.400 3.200H9.100v9.600H7.600V3.800H6z"/></svg></th><th style="letter-spacing:0.216px">Last Visit Date<svg class="srt" viewBox="0 0 11 14"><path d="M2.200 13.400 0 10.200h1.500V.6h1.400v9.600h1.500zM8.300.6l2.400 3.200H9.100v9.600H7.600V3.800H6z"/></svg></th><th style="letter-spacing:0.08px">Customer Since<svg class="srt" viewBox="0 0 11 14"><path d="M2.200 13.400 0 10.200h1.500V.6h1.400v9.600h1.500zM8.300.6l2.400 3.200H9.100v9.600H7.600V3.800H6z"/></svg></th><th style="letter-spacing:0.171px">Receive Communication?<svg class="srt" viewBox="0 0 11 14"><path d="M2.200 13.400 0 10.200h1.500V.6h1.400v9.600h1.500zM8.300.6l2.400 3.200H9.100v9.600H7.600V3.800H6z"/></svg></th><th style="letter-spacing:0.248px">Option(s)</th></tr></thead><tbody><tr class="od"><td class="nm"><div class="nmw"><b>a .gupta</b><span class="bz">0.00</span><span class="bo">Online Order Customer</span></div></td><td style="letter-spacing:0.328px">order3967896@bawarchiplano.com</td><td style="letter-spacing:.19px">8322821227</td><td class="r">0</td><td class="r">$0.00</td><td class="r">0</td><td style="letter-spacing:0.224px">8/25/2023 7:47 PM</td><td style="letter-spacing:0.224px">8/25/2023 7:47 PM</td><td>No</td><td class="op"><span class="opt"><svg style="left:10.5px;top:12.5px;width:15.5px;height:15.5px" viewBox="0 0 15 15"><path d="M10.700.7a1.200 1.200 0 0 1 1.700 0l1.900 1.900a1.200 1.200 0 0 1 0 1.700L13 5.600 9.400 2zM8.600 2.800l3.600 3.600-7.600 7.600H1v-3.600zM2.300 11.200v1.500h1.500l.5-.5-1.500-1.500z" fill-rule="evenodd"/></svg><svg style="left:35.800px;top:12.7px;width:17.500px;height:13.500px" viewBox="0 0 17.500 13.500"><path d="M0 .6C0 .3.3 0 .6 0h3.800c.3 0 .6.300.6.600v2.300c0 .3-.3.600-.6.600H.6C.3 3.500 0 3.200 0 2.900zm6.250 0c0-.3.300-.6.600-.6h3.800c.3 0 .6.300.6.600v2.300c0 .3-.3.600-.6.600h-3.800c-.3 0-.6-.3-.6-.600zm6.250 0c0-.3.300-.6.600-.6h3.800c.3 0 .6.300.6.600v2.300c0 .3-.3.600-.6.600h-3.800c-.3 0-.6-.3-.6-.600zM0 5.600c0-.3.300-.6.600-.6h3.800c.3 0 .6.300.6.600v2.300c0 .3-.3.600-.6.600H.6C.3 8.500 0 8.200 0 7.900zm6.250 0c0-.3.300-.6.600-.6h3.800c.3 0 .6.300.6.600v2.300c0 .3-.3.600-.6.600h-3.800c-.3 0-.6-.3-.6-.600zm6.250 0c0-.3.300-.6.600-.6h3.800c.3 0 .6.300.6.600v2.300c0 .3-.3.600-.6.600h-3.800c-.3 0-.6-.3-.6-.600zM0 10.600c0-.3.300-.6.600-.6h3.800c.3 0 .6.300.6.600v2.300c0 .3-.3.600-.6.600H.6c-.3 0-.6-.3-.6-.600zm6.250 0c0-.3.300-.6.600-.6h3.800c.3 0 .6.300.6.600v2.300c0 .3-.3.600-.6.600h-3.800c-.3 0-.6-.3-.6-.600zm6.250 0c0-.3.300-.6.600-.6h3.800c.3 0 .6.300.6.600v2.300c0 .3-.3.600-.6.600h-3.800c-.3 0-.6-.3-.6-.600z"/></svg><svg style="left:62px;top:12.5px;width:15px;height:15px" viewBox="0 0 15 15"><path d="M14.500.8v5.200c0 .3-.3.600-.6.600H8.700c-.5 0-.8-.6-.4-1l1.700-1.700A4.400 4.400 0 1 0 11 10.300c.1-.2.400-.2.600 0l1.300 1.300c.1.100.1.400 0 .5A7 7 0 1 1 12.200 2.200L13.500.4c.4-.4 1-.1 1 .4z"/></svg><svg style="left:86px;top:11.2px;width:19px;height:17px" viewBox="0 0 15 13.400"><circle cx="7.5" cy="4.6" r="2.5"/><path d="M3.4 13.4c-.9 0-1.5-.6-1.5-1.5 0-2.300.9-4.200 2.700-4.200.8.800 1.800 1.200 2.900 1.200s2.100-.4 2.900-1.200c1.800 0 2.700 1.900 2.700 4.200 0 .9-.6 1.500-1.500 1.500z"/><circle cx="2.9" cy="3.000" r="1.750"/><circle cx="12.100" cy="3.000" r="1.750"/><path d="M.2 7.300C.2 5.800.8 5 1.700 5c.5.400 1.200.600 1.900.500A3.500 3.500 0 0 0 4 7.200c-.9.100-1.500.600-1.900 1.200H1.200C.6 8.400.2 8 .2 7.300zM14.800 7.300c0-1.500-.6-2.300-1.500-2.300-.5.400-1.200.600-1.900.500a3.500 3.500 0 0 1-.4 1.700c.9.100 1.500.600 1.900 1.200h.9c.6 0 1-.4 1-1.100z"/></svg><svg style="left:110.2px;top:8.9px;width:23px;height:23px" viewBox="0 0 23 23"><path fill-rule="evenodd" d="M11.500 0a11.500 11.500 0 1 1 0 23 11.500 11.500 0 0 1 0-23zM9.500 3v3.300h4V3zM8 8.600v2.400h2v6H8v2.600h7.400V17h-2V8.600z"/></svg></span></td></tr><tr class="ev"><td class="nm"><div class="nmw"><b>a .b</b><span class="bz">0.00</span><span class="bo">Online Order Customer</span></div></td><td style="letter-spacing:0.328px">order3468534@bawarchiplano.com</td><td style="letter-spacing:.19px">4692384486</td><td class="r">0</td><td class="r">$0.00</td><td class="r">0</td><td style="letter-spacing:0.224px">2/25/2023 7:05 PM</td><td style="letter-spacing:0.224px">2/25/2023 7:05 PM</td><td>No</td><td class="op"><span class="opt"><svg style="left:10.5px;top:12.5px;width:15.5px;height:15.5px" viewBox="0 0 15 15"><path d="M10.700.7a1.200 1.200 0 0 1 1.700 0l1.900 1.900a1.200 1.200 0 0 1 0 1.700L13 5.600 9.400 2zM8.600 2.800l3.600 3.600-7.600 7.600H1v-3.600zM2.300 11.200v1.500h1.500l.5-.5-1.500-1.500z" fill-rule="evenodd"/></svg><svg style="left:35.800px;top:12.7px;width:17.500px;height:13.500px" viewBox="0 0 17.500 13.500"><path d="M0 .6C0 .3.3 0 .6 0h3.800c.3 0 .6.300.6.600v2.300c0 .3-.3.600-.6.600H.6C.3 3.500 0 3.200 0 2.900zm6.250 0c0-.3.300-.6.600-.6h3.800c.3 0 .6.300.6.600v2.300c0 .3-.3.600-.6.600h-3.800c-.3 0-.6-.3-.6-.600zm6.250 0c0-.3.300-.6.600-.6h3.800c.3 0 .6.300.6.600v2.300c0 .3-.3.600-.6.600h-3.800c-.3 0-.6-.3-.6-.600zM0 5.600c0-.3.300-.6.600-.6h3.800c.3 0 .6.300.6.600v2.300c0 .3-.3.600-.6.600H.6C.3 8.500 0 8.200 0 7.900zm6.250 0c0-.3.300-.6.600-.6h3.800c.3 0 .6.300.6.600v2.300c0 .3-.3.600-.6.600h-3.800c-.3 0-.6-.3-.6-.600zm6.250 0c0-.3.300-.6.600-.6h3.800c.3 0 .6.300.6.600v2.300c0 .3-.3.600-.6.600h-3.800c-.3 0-.6-.3-.6-.600zM0 10.600c0-.3.300-.6.600-.6h3.800c.3 0 .6.300.6.600v2.300c0 .3-.3.600-.6.600H.6c-.3 0-.6-.3-.6-.600zm6.250 0c0-.3.300-.6.600-.6h3.800c.3 0 .6.300.6.600v2.300c0 .3-.3.600-.6.600h-3.800c-.3 0-.6-.3-.6-.600zm6.250 0c0-.3.300-.6.600-.6h3.800c.3 0 .6.300.6.600v2.300c0 .3-.3.600-.6.600h-3.800c-.3 0-.6-.3-.6-.600z"/></svg><svg style="left:62px;top:12.5px;width:15px;height:15px" viewBox="0 0 15 15"><path d="M14.500.8v5.200c0 .3-.3.600-.6.600H8.700c-.5 0-.8-.6-.4-1l1.700-1.700A4.400 4.400 0 1 0 11 10.300c.1-.2.400-.2.600 0l1.300 1.300c.1.100.1.400 0 .5A7 7 0 1 1 12.200 2.200L13.500.4c.4-.4 1-.1 1 .4z"/></svg><svg style="left:86px;top:11.2px;width:19px;height:17px" viewBox="0 0 15 13.400"><circle cx="7.5" cy="4.6" r="2.5"/><path d="M3.4 13.4c-.9 0-1.5-.6-1.5-1.5 0-2.300.9-4.200 2.700-4.200.8.800 1.800 1.200 2.900 1.200s2.100-.4 2.900-1.200c1.800 0 2.700 1.900 2.700 4.200 0 .9-.6 1.500-1.500 1.500z"/><circle cx="2.9" cy="3.000" r="1.750"/><circle cx="12.100" cy="3.000" r="1.750"/><path d="M.2 7.300C.2 5.800.8 5 1.700 5c.5.400 1.200.600 1.900.500A3.500 3.500 0 0 0 4 7.200c-.9.100-1.500.600-1.900 1.200H1.200C.6 8.400.2 8 .2 7.300zM14.800 7.300c0-1.500-.6-2.300-1.500-2.300-.5.400-1.200.600-1.900.500a3.500 3.500 0 0 1-.4 1.700c.9.100 1.500.600 1.900 1.200h.9c.6 0 1-.4 1-1.100z"/></svg><svg style="left:110.2px;top:8.9px;width:23px;height:23px" viewBox="0 0 23 23"><path fill-rule="evenodd" d="M11.500 0a11.500 11.500 0 1 1 0 23 11.500 11.500 0 0 1 0-23zM9.500 3v3.300h4V3zM8 8.600v2.400h2v6H8v2.600h7.400V17h-2V8.600z"/></svg></span></td></tr><tr class="od"><td class="nm"><div class="nmw"><b>A .G</b><span class="bz">0.00</span><span class="bo">Online Order Customer</span></div></td><td style="letter-spacing:0.328px">order5106031@bawarchiplano.com</td><td style="letter-spacing:.19px">6574139515</td><td class="r">0</td><td class="r">$0.00</td><td class="r">0</td><td style="letter-spacing:0.276px">11/26/2024 9:34 PM</td><td style="letter-spacing:0.276px">11/26/2024 9:34 PM</td><td>No</td><td class="op"><span class="opt"><svg style="left:10.5px;top:12.5px;width:15.5px;height:15.5px" viewBox="0 0 15 15"><path d="M10.700.7a1.200 1.200 0 0 1 1.700 0l1.900 1.900a1.200 1.200 0 0 1 0 1.700L13 5.600 9.400 2zM8.600 2.800l3.600 3.600-7.600 7.600H1v-3.600zM2.300 11.200v1.500h1.500l.5-.5-1.500-1.500z" fill-rule="evenodd"/></svg><svg style="left:35.800px;top:12.7px;width:17.500px;height:13.500px" viewBox="0 0 17.500 13.500"><path d="M0 .6C0 .3.3 0 .6 0h3.800c.3 0 .6.300.6.600v2.300c0 .3-.3.600-.6.600H.6C.3 3.500 0 3.200 0 2.900zm6.250 0c0-.3.300-.6.600-.6h3.800c.3 0 .6.300.6.600v2.300c0 .3-.3.600-.6.600h-3.800c-.3 0-.6-.3-.6-.600zm6.250 0c0-.3.300-.6.600-.6h3.800c.3 0 .6.300.6.600v2.300c0 .3-.3.600-.6.600h-3.800c-.3 0-.6-.3-.6-.600zM0 5.600c0-.3.300-.6.600-.6h3.800c.3 0 .6.300.6.600v2.300c0 .3-.3.600-.6.600H.6C.3 8.500 0 8.200 0 7.900zm6.250 0c0-.3.300-.6.600-.6h3.800c.3 0 .6.300.6.600v2.300c0 .3-.3.600-.6.600h-3.800c-.3 0-.6-.3-.6-.600zm6.250 0c0-.3.300-.6.600-.6h3.800c.3 0 .6.300.6.600v2.300c0 .3-.3.600-.6.600h-3.800c-.3 0-.6-.3-.6-.600zM0 10.600c0-.3.300-.6.600-.6h3.800c.3 0 .6.300.6.600v2.300c0 .3-.3.600-.6.600H.6c-.3 0-.6-.3-.6-.600zm6.250 0c0-.3.300-.6.600-.6h3.800c.3 0 .6.300.6.600v2.300c0 .3-.3.600-.6.600h-3.800c-.3 0-.6-.3-.6-.600zm6.250 0c0-.3.300-.6.600-.6h3.800c.3 0 .6.300.6.600v2.300c0 .3-.3.600-.6.600h-3.800c-.3 0-.6-.3-.6-.600z"/></svg><svg style="left:62px;top:12.5px;width:15px;height:15px" viewBox="0 0 15 15"><path d="M14.500.8v5.200c0 .3-.3.600-.6.600H8.700c-.5 0-.8-.6-.4-1l1.700-1.700A4.400 4.400 0 1 0 11 10.300c.1-.2.400-.2.600 0l1.300 1.300c.1.100.1.400 0 .5A7 7 0 1 1 12.200 2.200L13.500.4c.4-.4 1-.1 1 .4z"/></svg><svg style="left:86px;top:11.2px;width:19px;height:17px" viewBox="0 0 15 13.400"><circle cx="7.5" cy="4.6" r="2.5"/><path d="M3.4 13.4c-.9 0-1.5-.6-1.5-1.5 0-2.300.9-4.200 2.700-4.200.8.800 1.800 1.200 2.900 1.200s2.100-.4 2.900-1.200c1.800 0 2.700 1.900 2.700 4.200 0 .9-.6 1.500-1.500 1.500z"/><circle cx="2.9" cy="3.000" r="1.750"/><circle cx="12.100" cy="3.000" r="1.750"/><path d="M.2 7.300C.2 5.800.8 5 1.700 5c.5.400 1.200.600 1.900.500A3.500 3.500 0 0 0 4 7.200c-.9.100-1.500.600-1.900 1.200H1.200C.6 8.400.2 8 .2 7.300zM14.800 7.300c0-1.500-.6-2.300-1.500-2.300-.5.400-1.200.600-1.900.500a3.500 3.500 0 0 1-.4 1.700c.9.100 1.500.600 1.900 1.200h.9c.6 0 1-.4 1-1.100z"/></svg><svg style="left:110.2px;top:8.9px;width:23px;height:23px" viewBox="0 0 23 23"><path fill-rule="evenodd" d="M11.500 0a11.500 11.500 0 1 1 0 23 11.500 11.500 0 0 1 0-23zM9.500 3v3.300h4V3zM8 8.600v2.400h2v6H8v2.600h7.400V17h-2V8.600z"/></svg></span></td></tr><tr class="ev"><td class="nm"><div class="nmw"><b>A .k</b><span class="bz">0.00</span><span class="bo">Online Order Customer</span></div></td><td style="letter-spacing:0.328px">order4633581@bawarchiplano.com</td><td style="letter-spacing:.19px">6789784007</td><td class="r">0</td><td class="r">$0.00</td><td class="r">0</td><td style="letter-spacing:0.225px">5/4/2024 2:00 PM</td><td style="letter-spacing:0.225px">5/4/2024 2:00 PM</td><td>No</td><td class="op"><span class="opt"><svg style="left:10.5px;top:12.5px;width:15.5px;height:15.5px" viewBox="0 0 15 15"><path d="M10.700.7a1.200 1.200 0 0 1 1.700 0l1.900 1.900a1.200 1.200 0 0 1 0 1.700L13 5.600 9.400 2zM8.600 2.800l3.600 3.600-7.600 7.600H1v-3.600zM2.300 11.200v1.500h1.500l.5-.5-1.500-1.500z" fill-rule="evenodd"/></svg><svg style="left:35.800px;top:12.7px;width:17.500px;height:13.500px" viewBox="0 0 17.500 13.500"><path d="M0 .6C0 .3.3 0 .6 0h3.800c.3 0 .6.300.6.600v2.300c0 .3-.3.600-.6.600H.6C.3 3.500 0 3.200 0 2.900zm6.250 0c0-.3.300-.6.600-.6h3.800c.3 0 .6.300.6.600v2.300c0 .3-.3.600-.6.600h-3.800c-.3 0-.6-.3-.6-.600zm6.250 0c0-.3.300-.6.600-.6h3.800c.3 0 .6.300.6.600v2.300c0 .3-.3.600-.6.600h-3.800c-.3 0-.6-.3-.6-.600zM0 5.600c0-.3.300-.6.600-.6h3.800c.3 0 .6.300.6.600v2.300c0 .3-.3.600-.6.600H.6C.3 8.500 0 8.200 0 7.900zm6.250 0c0-.3.300-.6.600-.6h3.800c.3 0 .6.300.6.600v2.300c0 .3-.3.600-.6.600h-3.800c-.3 0-.6-.3-.6-.600zm6.250 0c0-.3.300-.6.600-.6h3.800c.3 0 .6.300.6.600v2.300c0 .3-.3.600-.6.600h-3.800c-.3 0-.6-.3-.6-.600zM0 10.600c0-.3.300-.6.600-.6h3.800c.3 0 .6.300.6.600v2.300c0 .3-.3.600-.6.600H.6c-.3 0-.6-.3-.6-.600zm6.250 0c0-.3.300-.6.600-.6h3.800c.3 0 .6.300.6.600v2.300c0 .3-.3.600-.6.600h-3.800c-.3 0-.6-.3-.6-.600zm6.250 0c0-.3.300-.6.600-.6h3.800c.3 0 .6.300.6.600v2.300c0 .3-.3.600-.6.600h-3.800c-.3 0-.6-.3-.6-.600z"/></svg><svg style="left:62px;top:12.5px;width:15px;height:15px" viewBox="0 0 15 15"><path d="M14.500.8v5.200c0 .3-.3.600-.6.600H8.700c-.5 0-.8-.6-.4-1l1.700-1.700A4.400 4.400 0 1 0 11 10.300c.1-.2.400-.2.600 0l1.300 1.300c.1.100.1.400 0 .5A7 7 0 1 1 12.200 2.200L13.500.4c.4-.4 1-.1 1 .4z"/></svg><svg style="left:86px;top:11.2px;width:19px;height:17px" viewBox="0 0 15 13.400"><circle cx="7.5" cy="4.6" r="2.5"/><path d="M3.4 13.4c-.9 0-1.5-.6-1.5-1.5 0-2.300.9-4.200 2.700-4.200.8.800 1.800 1.200 2.900 1.200s2.100-.4 2.900-1.200c1.800 0 2.700 1.900 2.700 4.200 0 .9-.6 1.500-1.500 1.500z"/><circle cx="2.9" cy="3.000" r="1.750"/><circle cx="12.100" cy="3.000" r="1.750"/><path d="M.2 7.300C.2 5.800.8 5 1.700 5c.5.400 1.200.600 1.900.500A3.500 3.500 0 0 0 4 7.200c-.9.100-1.500.600-1.900 1.200H1.200C.6 8.400.2 8 .2 7.300zM14.800 7.300c0-1.500-.6-2.300-1.500-2.300-.5.400-1.200.600-1.900.500a3.500 3.500 0 0 1-.4 1.700c.9.100 1.500.600 1.900 1.200h.9c.6 0 1-.4 1-1.100z"/></svg><svg style="left:110.2px;top:8.9px;width:23px;height:23px" viewBox="0 0 23 23"><path fill-rule="evenodd" d="M11.500 0a11.500 11.500 0 1 1 0 23 11.500 11.500 0 0 1 0-23zM9.500 3v3.300h4V3zM8 8.600v2.400h2v6H8v2.600h7.400V17h-2V8.600z"/></svg></span></td></tr><tr class="od"><td class="nm"><div class="nmw"><b>A .K</b><span class="bz">0.00</span><span class="bo">Online Order Customer</span></div></td><td style="letter-spacing:0.328px">order5121301@bawarchiplano.com</td><td style="letter-spacing:.19px">8563832235</td><td class="r">0</td><td class="r">$0.00</td><td class="r">0</td><td style="letter-spacing:0.224px">12/3/2024 6:01 PM</td><td style="letter-spacing:0.224px">12/3/2024 6:01 PM</td><td>No</td><td class="op"><span class="opt"><svg style="left:10.5px;top:12.5px;width:15.5px;height:15.5px" viewBox="0 0 15 15"><path d="M10.700.7a1.200 1.200 0 0 1 1.700 0l1.900 1.900a1.200 1.200 0 0 1 0 1.700L13 5.600 9.400 2zM8.600 2.800l3.600 3.600-7.600 7.600H1v-3.600zM2.300 11.200v1.500h1.500l.5-.5-1.500-1.500z" fill-rule="evenodd"/></svg><svg style="left:35.800px;top:12.7px;width:17.500px;height:13.500px" viewBox="0 0 17.500 13.500"><path d="M0 .6C0 .3.3 0 .6 0h3.800c.3 0 .6.300.6.600v2.300c0 .3-.3.600-.6.600H.6C.3 3.500 0 3.200 0 2.900zm6.250 0c0-.3.300-.6.600-.6h3.800c.3 0 .6.300.6.600v2.300c0 .3-.3.600-.6.600h-3.800c-.3 0-.6-.3-.6-.600zm6.250 0c0-.3.300-.6.600-.6h3.800c.3 0 .6.300.6.600v2.300c0 .3-.3.600-.6.600h-3.800c-.3 0-.6-.3-.6-.600zM0 5.600c0-.3.300-.6.600-.6h3.800c.3 0 .6.300.6.600v2.300c0 .3-.3.600-.6.600H.6C.3 8.500 0 8.200 0 7.900zm6.250 0c0-.3.300-.6.600-.6h3.800c.3 0 .6.300.6.600v2.300c0 .3-.3.600-.6.600h-3.800c-.3 0-.6-.3-.6-.600zm6.250 0c0-.3.300-.6.600-.6h3.800c.3 0 .6.300.6.600v2.300c0 .3-.3.600-.6.600h-3.800c-.3 0-.6-.3-.6-.600zM0 10.600c0-.3.300-.6.600-.6h3.800c.3 0 .6.300.6.600v2.300c0 .3-.3.600-.6.600H.6c-.3 0-.6-.3-.6-.600zm6.250 0c0-.3.300-.6.600-.6h3.800c.3 0 .6.300.6.600v2.300c0 .3-.3.600-.6.600h-3.800c-.3 0-.6-.3-.6-.600zm6.250 0c0-.3.300-.6.600-.6h3.800c.3 0 .6.300.6.600v2.300c0 .3-.3.600-.6.600h-3.800c-.3 0-.6-.3-.6-.600z"/></svg><svg style="left:62px;top:12.5px;width:15px;height:15px" viewBox="0 0 15 15"><path d="M14.500.8v5.200c0 .3-.3.600-.6.600H8.700c-.5 0-.8-.6-.4-1l1.700-1.700A4.400 4.400 0 1 0 11 10.300c.1-.2.400-.2.600 0l1.300 1.300c.1.100.1.400 0 .5A7 7 0 1 1 12.200 2.200L13.500.4c.4-.4 1-.1 1 .4z"/></svg><svg style="left:86px;top:11.2px;width:19px;height:17px" viewBox="0 0 15 13.400"><circle cx="7.5" cy="4.6" r="2.5"/><path d="M3.4 13.4c-.9 0-1.5-.6-1.5-1.5 0-2.300.9-4.200 2.700-4.200.8.800 1.800 1.200 2.900 1.200s2.100-.4 2.900-1.200c1.800 0 2.700 1.900 2.700 4.200 0 .9-.6 1.500-1.500 1.500z"/><circle cx="2.9" cy="3.000" r="1.750"/><circle cx="12.100" cy="3.000" r="1.750"/><path d="M.2 7.300C.2 5.800.8 5 1.700 5c.5.400 1.200.600 1.900.500A3.500 3.500 0 0 0 4 7.200c-.9.100-1.500.600-1.900 1.200H1.200C.6 8.400.2 8 .2 7.300zM14.800 7.300c0-1.500-.6-2.300-1.500-2.300-.5.400-1.200.600-1.900.500a3.500 3.500 0 0 1-.4 1.700c.9.100 1.500.600 1.900 1.200h.9c.6 0 1-.4 1-1.100z"/></svg><svg style="left:110.2px;top:8.9px;width:23px;height:23px" viewBox="0 0 23 23"><path fill-rule="evenodd" d="M11.500 0a11.500 11.500 0 1 1 0 23 11.500 11.500 0 0 1 0-23zM9.500 3v3.300h4V3zM8 8.600v2.400h2v6H8v2.600h7.400V17h-2V8.600z"/></svg></span></td></tr><tr class="ev"><td class="nm"><div class="nmw"><b>A .K</b><span class="bz">0.00</span><span class="bo">Online Order Customer</span></div></td><td style="letter-spacing:0.328px">order5214941@bawarchiplano.com</td><td style="letter-spacing:.19px">4695845956</td><td class="r">0</td><td class="r">$0.00</td><td class="r">0</td><td style="letter-spacing:0.338px">1/12/2025 11:59 AM</td><td style="letter-spacing:0.338px">1/12/2025 11:59 AM</td><td>No</td><td class="op"><span class="opt"><svg style="left:10.5px;top:12.5px;width:15.5px;height:15.5px" viewBox="0 0 15 15"><path d="M10.700.7a1.200 1.200 0 0 1 1.700 0l1.900 1.900a1.200 1.200 0 0 1 0 1.700L13 5.600 9.400 2zM8.600 2.800l3.600 3.600-7.600 7.600H1v-3.600zM2.300 11.200v1.500h1.500l.5-.5-1.500-1.500z" fill-rule="evenodd"/></svg><svg style="left:35.800px;top:12.7px;width:17.500px;height:13.500px" viewBox="0 0 17.500 13.500"><path d="M0 .6C0 .3.3 0 .6 0h3.800c.3 0 .6.300.6.600v2.300c0 .3-.3.600-.6.600H.6C.3 3.500 0 3.200 0 2.900zm6.250 0c0-.3.300-.6.600-.6h3.800c.3 0 .6.300.6.600v2.300c0 .3-.3.600-.6.600h-3.800c-.3 0-.6-.3-.6-.600zm6.250 0c0-.3.300-.6.600-.6h3.800c.3 0 .6.300.6.600v2.300c0 .3-.3.600-.6.600h-3.800c-.3 0-.6-.3-.6-.600zM0 5.600c0-.3.300-.6.600-.6h3.800c.3 0 .6.300.6.600v2.300c0 .3-.3.600-.6.600H.6C.3 8.500 0 8.200 0 7.900zm6.250 0c0-.3.300-.6.600-.6h3.800c.3 0 .6.300.6.600v2.300c0 .3-.3.600-.6.600h-3.800c-.3 0-.6-.3-.6-.600zm6.250 0c0-.3.300-.6.600-.6h3.800c.3 0 .6.300.6.600v2.300c0 .3-.3.600-.6.600h-3.800c-.3 0-.6-.3-.6-.600zM0 10.600c0-.3.300-.6.600-.6h3.800c.3 0 .6.300.6.600v2.300c0 .3-.3.600-.6.600H.6c-.3 0-.6-.3-.6-.600zm6.250 0c0-.3.300-.6.600-.6h3.800c.3 0 .6.300.6.600v2.300c0 .3-.3.600-.6.600h-3.800c-.3 0-.6-.3-.6-.600zm6.250 0c0-.3.300-.6.600-.6h3.800c.3 0 .6.300.6.600v2.300c0 .3-.3.600-.6.600h-3.800c-.3 0-.6-.3-.6-.600z"/></svg><svg style="left:62px;top:12.5px;width:15px;height:15px" viewBox="0 0 15 15"><path d="M14.500.8v5.200c0 .3-.3.600-.6.600H8.700c-.5 0-.8-.6-.4-1l1.700-1.700A4.400 4.400 0 1 0 11 10.300c.1-.2.400-.2.600 0l1.300 1.300c.1.100.1.400 0 .5A7 7 0 1 1 12.200 2.200L13.500.4c.4-.4 1-.1 1 .4z"/></svg><svg style="left:86px;top:11.2px;width:19px;height:17px" viewBox="0 0 15 13.400"><circle cx="7.5" cy="4.6" r="2.5"/><path d="M3.4 13.4c-.9 0-1.5-.6-1.5-1.5 0-2.300.9-4.200 2.700-4.200.8.800 1.800 1.200 2.900 1.200s2.100-.4 2.900-1.200c1.800 0 2.700 1.900 2.700 4.200 0 .9-.6 1.500-1.500 1.500z"/><circle cx="2.9" cy="3.000" r="1.750"/><circle cx="12.100" cy="3.000" r="1.750"/><path d="M.2 7.300C.2 5.800.8 5 1.700 5c.5.400 1.200.600 1.900.500A3.500 3.500 0 0 0 4 7.200c-.9.100-1.500.600-1.900 1.200H1.200C.6 8.400.2 8 .2 7.300zM14.800 7.300c0-1.500-.6-2.300-1.500-2.300-.5.400-1.200.600-1.900.500a3.500 3.500 0 0 1-.4 1.700c.9.100 1.500.600 1.900 1.200h.9c.6 0 1-.4 1-1.100z"/></svg><svg style="left:110.2px;top:8.9px;width:23px;height:23px" viewBox="0 0 23 23"><path fill-rule="evenodd" d="M11.500 0a11.500 11.500 0 1 1 0 23 11.500 11.500 0 0 1 0-23zM9.500 3v3.300h4V3zM8 8.600v2.400h2v6H8v2.600h7.400V17h-2V8.600z"/></svg></span></td></tr><tr class="od"><td class="nm"><div class="nmw"><b>A .T</b><span class="bz">0.00</span><span class="bo">Online Order Customer</span></div></td><td style="letter-spacing:0.328px">order5260601@bawarchiplano.com</td><td style="letter-spacing:.19px">6822414516</td><td class="r">0</td><td class="r">$0.00</td><td class="r">0</td><td style="letter-spacing:0.224px">1/31/2025 9:57 PM</td><td style="letter-spacing:0.224px">1/31/2025 9:57 PM</td><td>No</td><td class="op"><span class="opt"><svg style="left:10.5px;top:12.5px;width:15.5px;height:15.5px" viewBox="0 0 15 15"><path d="M10.700.7a1.200 1.200 0 0 1 1.700 0l1.900 1.900a1.200 1.200 0 0 1 0 1.700L13 5.600 9.400 2zM8.600 2.800l3.600 3.600-7.600 7.600H1v-3.600zM2.300 11.200v1.500h1.500l.5-.5-1.500-1.500z" fill-rule="evenodd"/></svg><svg style="left:35.800px;top:12.7px;width:17.500px;height:13.500px" viewBox="0 0 17.500 13.500"><path d="M0 .6C0 .3.3 0 .6 0h3.800c.3 0 .6.300.6.600v2.300c0 .3-.3.600-.6.600H.6C.3 3.500 0 3.200 0 2.900zm6.250 0c0-.3.300-.6.600-.6h3.800c.3 0 .6.300.6.600v2.300c0 .3-.3.600-.6.600h-3.800c-.3 0-.6-.3-.6-.600zm6.250 0c0-.3.300-.6.600-.6h3.800c.3 0 .6.300.6.600v2.300c0 .3-.3.600-.6.600h-3.800c-.3 0-.6-.3-.6-.600zM0 5.600c0-.3.300-.6.600-.6h3.800c.3 0 .6.300.6.600v2.300c0 .3-.3.600-.6.600H.6C.3 8.500 0 8.200 0 7.900zm6.250 0c0-.3.300-.6.600-.6h3.800c.3 0 .6.300.6.600v2.300c0 .3-.3.600-.6.600h-3.800c-.3 0-.6-.3-.6-.600zm6.250 0c0-.3.300-.6.600-.6h3.800c.3 0 .6.300.6.600v2.300c0 .3-.3.600-.6.600h-3.800c-.3 0-.6-.3-.6-.600zM0 10.600c0-.3.300-.6.600-.6h3.800c.3 0 .6.300.6.600v2.300c0 .3-.3.600-.6.600H.6c-.3 0-.6-.3-.6-.600zm6.250 0c0-.3.300-.6.600-.6h3.800c.3 0 .6.300.6.600v2.300c0 .3-.3.600-.6.600h-3.800c-.3 0-.6-.3-.6-.600zm6.250 0c0-.3.300-.6.600-.6h3.800c.3 0 .6.300.6.600v2.300c0 .3-.3.600-.6.600h-3.800c-.3 0-.6-.3-.6-.600z"/></svg><svg style="left:62px;top:12.5px;width:15px;height:15px" viewBox="0 0 15 15"><path d="M14.500.8v5.200c0 .3-.3.600-.6.600H8.700c-.5 0-.8-.6-.4-1l1.700-1.700A4.400 4.400 0 1 0 11 10.300c.1-.2.400-.2.600 0l1.300 1.300c.1.100.1.400 0 .5A7 7 0 1 1 12.200 2.200L13.500.4c.4-.4 1-.1 1 .4z"/></svg><svg style="left:86px;top:11.2px;width:19px;height:17px" viewBox="0 0 15 13.400"><circle cx="7.5" cy="4.6" r="2.5"/><path d="M3.4 13.4c-.9 0-1.5-.6-1.5-1.5 0-2.300.9-4.200 2.700-4.200.8.800 1.800 1.200 2.900 1.200s2.100-.4 2.900-1.200c1.800 0 2.700 1.900 2.700 4.200 0 .9-.6 1.500-1.500 1.500z"/><circle cx="2.9" cy="3.000" r="1.750"/><circle cx="12.100" cy="3.000" r="1.750"/><path d="M.2 7.300C.2 5.800.8 5 1.700 5c.5.400 1.200.600 1.900.500A3.500 3.500 0 0 0 4 7.200c-.9.100-1.500.600-1.900 1.200H1.200C.6 8.400.2 8 .2 7.300zM14.800 7.300c0-1.500-.6-2.300-1.500-2.300-.5.400-1.200.600-1.900.500a3.500 3.500 0 0 1-.4 1.700c.9.100 1.500.600 1.900 1.200h.9c.6 0 1-.4 1-1.100z"/></svg><svg style="left:110.2px;top:8.9px;width:23px;height:23px" viewBox="0 0 23 23"><path fill-rule="evenodd" d="M11.500 0a11.500 11.500 0 1 1 0 23 11.500 11.500 0 0 1 0-23zM9.500 3v3.300h4V3zM8 8.600v2.400h2v6H8v2.600h7.400V17h-2V8.600z"/></svg></span></td></tr><tr class="ev"><td class="nm"><div class="nmw"><b>A B</b><span class="bz">0.00</span><span class="bo">Online Order Customer</span></div></td><td style="letter-spacing:0.328px">order3517394@bawarchiplano.com</td><td style="letter-spacing:.19px">9177330125</td><td class="r">0</td><td class="r">$0.00</td><td class="r">0</td><td style="letter-spacing:0.224px">3/14/2023 8:56 PM</td><td style="letter-spacing:0.224px">3/14/2023 8:56 PM</td><td>No</td><td class="op"><span class="opt"><svg style="left:10.5px;top:12.5px;width:15.5px;height:15.5px" viewBox="0 0 15 15"><path d="M10.700.7a1.200 1.200 0 0 1 1.700 0l1.900 1.900a1.200 1.200 0 0 1 0 1.700L13 5.600 9.400 2zM8.600 2.800l3.600 3.600-7.600 7.600H1v-3.600zM2.300 11.200v1.500h1.500l.5-.5-1.500-1.500z" fill-rule="evenodd"/></svg><svg style="left:35.800px;top:12.7px;width:17.500px;height:13.500px" viewBox="0 0 17.500 13.500"><path d="M0 .6C0 .3.3 0 .6 0h3.800c.3 0 .6.300.6.600v2.300c0 .3-.3.600-.6.600H.6C.3 3.500 0 3.200 0 2.900zm6.250 0c0-.3.300-.6.600-.6h3.800c.3 0 .6.300.6.600v2.300c0 .3-.3.600-.6.600h-3.800c-.3 0-.6-.3-.6-.600zm6.250 0c0-.3.300-.6.600-.6h3.800c.3 0 .6.300.6.600v2.300c0 .3-.3.600-.6.600h-3.800c-.3 0-.6-.3-.6-.600zM0 5.600c0-.3.300-.6.600-.6h3.800c.3 0 .6.300.6.600v2.300c0 .3-.3.600-.6.600H.6C.3 8.500 0 8.200 0 7.900zm6.250 0c0-.3.300-.6.600-.6h3.800c.3 0 .6.300.6.600v2.300c0 .3-.3.600-.6.600h-3.800c-.3 0-.6-.3-.6-.600zm6.250 0c0-.3.300-.6.600-.6h3.800c.3 0 .6.300.6.600v2.300c0 .3-.3.600-.6.600h-3.800c-.3 0-.6-.3-.6-.600zM0 10.600c0-.3.300-.6.600-.6h3.800c.3 0 .6.300.6.600v2.300c0 .3-.3.600-.6.600H.6c-.3 0-.6-.3-.6-.600zm6.250 0c0-.3.300-.6.600-.6h3.800c.3 0 .6.300.6.600v2.300c0 .3-.3.600-.6.600h-3.800c-.3 0-.6-.3-.6-.600zm6.250 0c0-.3.300-.6.600-.6h3.800c.3 0 .6.300.6.600v2.300c0 .3-.3.600-.6.600h-3.800c-.3 0-.6-.3-.6-.600z"/></svg><svg style="left:62px;top:12.5px;width:15px;height:15px" viewBox="0 0 15 15"><path d="M14.500.8v5.200c0 .3-.3.600-.6.600H8.700c-.5 0-.8-.6-.4-1l1.700-1.700A4.400 4.400 0 1 0 11 10.300c.1-.2.400-.2.600 0l1.300 1.300c.1.100.1.400 0 .5A7 7 0 1 1 12.200 2.200L13.500.4c.4-.4 1-.1 1 .4z"/></svg><svg style="left:86px;top:11.2px;width:19px;height:17px" viewBox="0 0 15 13.400"><circle cx="7.5" cy="4.6" r="2.5"/><path d="M3.4 13.4c-.9 0-1.5-.6-1.5-1.5 0-2.300.9-4.200 2.700-4.200.8.800 1.800 1.200 2.900 1.200s2.100-.4 2.900-1.200c1.800 0 2.700 1.900 2.700 4.200 0 .9-.6 1.500-1.500 1.500z"/><circle cx="2.9" cy="3.000" r="1.750"/><circle cx="12.100" cy="3.000" r="1.750"/><path d="M.2 7.300C.2 5.800.8 5 1.700 5c.5.400 1.200.600 1.900.500A3.500 3.500 0 0 0 4 7.200c-.9.100-1.500.600-1.900 1.200H1.200C.6 8.400.2 8 .2 7.300zM14.800 7.300c0-1.500-.6-2.300-1.500-2.300-.5.400-1.200.600-1.900.500a3.500 3.500 0 0 1-.4 1.700c.9.100 1.500.600 1.900 1.200h.9c.6 0 1-.4 1-1.100z"/></svg><svg style="left:110.2px;top:8.9px;width:23px;height:23px" viewBox="0 0 23 23"><path fill-rule="evenodd" d="M11.500 0a11.500 11.500 0 1 1 0 23 11.500 11.500 0 0 1 0-23zM9.500 3v3.300h4V3zM8 8.600v2.400h2v6H8v2.600h7.400V17h-2V8.600z"/></svg></span></td></tr><tr class="od"><td class="nm"><div class="nmw"><b>a d</b><span class="bz">0.00</span><span class="bo">Online Order Customer</span></div></td><td style="letter-spacing:0.328px">order3935451@bawarchiplano.com</td><td style="letter-spacing:.19px">4097675697</td><td class="r">0</td><td class="r">$0.00</td><td class="r">0</td><td style="letter-spacing:0.285px">8/13/2023 10:49 AM</td><td style="letter-spacing:0.285px">8/13/2023 10:49 AM</td><td>No</td><td class="op"><span class="opt"><svg style="left:10.5px;top:12.5px;width:15.5px;height:15.5px" viewBox="0 0 15 15"><path d="M10.700.7a1.200 1.200 0 0 1 1.700 0l1.900 1.900a1.200 1.200 0 0 1 0 1.700L13 5.600 9.400 2zM8.600 2.800l3.600 3.600-7.600 7.600H1v-3.600zM2.300 11.200v1.500h1.500l.5-.5-1.500-1.500z" fill-rule="evenodd"/></svg><svg style="left:35.800px;top:12.7px;width:17.500px;height:13.500px" viewBox="0 0 17.500 13.500"><path d="M0 .6C0 .3.3 0 .6 0h3.800c.3 0 .6.300.6.600v2.300c0 .3-.3.600-.6.600H.6C.3 3.500 0 3.200 0 2.900zm6.250 0c0-.3.300-.6.600-.6h3.800c.3 0 .6.300.6.600v2.300c0 .3-.3.600-.6.600h-3.800c-.3 0-.6-.3-.6-.600zm6.250 0c0-.3.300-.6.600-.6h3.800c.3 0 .6.300.6.600v2.300c0 .3-.3.600-.6.600h-3.800c-.3 0-.6-.3-.6-.600zM0 5.600c0-.3.300-.6.600-.6h3.800c.3 0 .6.300.6.600v2.300c0 .3-.3.600-.6.600H.6C.3 8.500 0 8.200 0 7.900zm6.250 0c0-.3.300-.6.600-.6h3.800c.3 0 .6.300.6.600v2.300c0 .3-.3.600-.6.600h-3.800c-.3 0-.6-.3-.6-.600zm6.250 0c0-.3.300-.6.600-.6h3.800c.3 0 .6.300.6.600v2.300c0 .3-.3.600-.6.600h-3.800c-.3 0-.6-.3-.6-.600zM0 10.600c0-.3.300-.6.600-.6h3.800c.3 0 .6.300.6.600v2.300c0 .3-.3.600-.6.600H.6c-.3 0-.6-.3-.6-.600zm6.250 0c0-.3.300-.6.600-.6h3.800c.3 0 .6.300.6.600v2.300c0 .3-.3.600-.6.600h-3.800c-.3 0-.6-.3-.6-.600zm6.250 0c0-.3.300-.6.600-.6h3.800c.3 0 .6.300.6.600v2.300c0 .3-.3.600-.6.600h-3.800c-.3 0-.6-.3-.6-.600z"/></svg><svg style="left:62px;top:12.5px;width:15px;height:15px" viewBox="0 0 15 15"><path d="M14.500.8v5.200c0 .3-.3.600-.6.600H8.700c-.5 0-.8-.6-.4-1l1.700-1.700A4.400 4.400 0 1 0 11 10.300c.1-.2.400-.2.600 0l1.300 1.300c.1.100.1.400 0 .5A7 7 0 1 1 12.200 2.200L13.500.4c.4-.4 1-.1 1 .4z"/></svg><svg style="left:86px;top:11.2px;width:19px;height:17px" viewBox="0 0 15 13.400"><circle cx="7.5" cy="4.6" r="2.5"/><path d="M3.4 13.4c-.9 0-1.5-.6-1.5-1.5 0-2.300.9-4.200 2.700-4.200.8.800 1.800 1.200 2.900 1.200s2.100-.4 2.900-1.200c1.800 0 2.700 1.900 2.700 4.200 0 .9-.6 1.500-1.500 1.500z"/><circle cx="2.9" cy="3.000" r="1.750"/><circle cx="12.100" cy="3.000" r="1.750"/><path d="M.2 7.300C.2 5.800.8 5 1.700 5c.5.400 1.200.600 1.900.500A3.500 3.500 0 0 0 4 7.200c-.9.100-1.500.600-1.900 1.200H1.200C.6 8.400.2 8 .2 7.300zM14.800 7.300c0-1.500-.6-2.300-1.500-2.300-.5.400-1.200.600-1.900.500a3.500 3.500 0 0 1-.4 1.700c.9.100 1.500.600 1.900 1.200h.9c.6 0 1-.4 1-1.100z"/></svg><svg style="left:110.2px;top:8.9px;width:23px;height:23px" viewBox="0 0 23 23"><path fill-rule="evenodd" d="M11.500 0a11.500 11.500 0 1 1 0 23 11.500 11.500 0 0 1 0-23zM9.500 3v3.300h4V3zM8 8.600v2.400h2v6H8v2.600h7.400V17h-2V8.600z"/></svg></span></td></tr><tr class="ev"><td class="nm"><div class="nmw"><b>A D</b><span class="bz">0.00</span><span class="bo">Online Order Customer</span></div></td><td style="letter-spacing:0.328px">order4436090@bawarchiplano.com</td><td style="letter-spacing:.19px">7042522572</td><td class="r">0</td><td class="r">$0.00</td><td class="r">0</td><td style="letter-spacing:0.224px">2/19/2024 8:02 PM</td><td style="letter-spacing:0.224px">2/19/2024 8:02 PM</td><td>No</td><td class="op"><span class="opt"><svg style="left:10.5px;top:12.5px;width:15.5px;height:15.5px" viewBox="0 0 15 15"><path d="M10.700.7a1.200 1.200 0 0 1 1.700 0l1.900 1.900a1.200 1.200 0 0 1 0 1.700L13 5.600 9.400 2zM8.600 2.800l3.600 3.600-7.600 7.600H1v-3.600zM2.300 11.200v1.500h1.500l.5-.5-1.500-1.500z" fill-rule="evenodd"/></svg><svg style="left:35.800px;top:12.7px;width:17.500px;height:13.500px" viewBox="0 0 17.500 13.500"><path d="M0 .6C0 .3.3 0 .6 0h3.800c.3 0 .6.300.6.600v2.300c0 .3-.3.600-.6.600H.6C.3 3.500 0 3.200 0 2.900zm6.250 0c0-.3.300-.6.600-.6h3.800c.3 0 .6.300.6.600v2.300c0 .3-.3.600-.6.600h-3.800c-.3 0-.6-.3-.6-.600zm6.250 0c0-.3.300-.6.600-.6h3.800c.3 0 .6.300.6.600v2.300c0 .3-.3.600-.6.600h-3.800c-.3 0-.6-.3-.6-.600zM0 5.600c0-.3.300-.6.600-.6h3.800c.3 0 .6.300.6.600v2.300c0 .3-.3.600-.6.600H.6C.3 8.500 0 8.200 0 7.900zm6.250 0c0-.3.300-.6.600-.6h3.800c.3 0 .6.300.6.600v2.300c0 .3-.3.600-.6.600h-3.800c-.3 0-.6-.3-.6-.600zm6.250 0c0-.3.300-.6.600-.6h3.800c.3 0 .6.300.6.600v2.300c0 .3-.3.600-.6.600h-3.800c-.3 0-.6-.3-.6-.600zM0 10.600c0-.3.300-.6.600-.6h3.800c.3 0 .6.300.6.600v2.300c0 .3-.3.600-.6.600H.6c-.3 0-.6-.3-.6-.600zm6.250 0c0-.3.300-.6.600-.6h3.800c.3 0 .6.300.6.600v2.300c0 .3-.3.600-.6.600h-3.800c-.3 0-.6-.3-.6-.600zm6.250 0c0-.3.300-.6.600-.6h3.800c.3 0 .6.300.6.600v2.300c0 .3-.3.600-.6.600h-3.800c-.3 0-.6-.3-.6-.600z"/></svg><svg style="left:62px;top:12.5px;width:15px;height:15px" viewBox="0 0 15 15"><path d="M14.500.8v5.200c0 .3-.3.600-.6.600H8.700c-.5 0-.8-.6-.4-1l1.700-1.700A4.400 4.400 0 1 0 11 10.300c.1-.2.400-.2.600 0l1.300 1.300c.1.100.1.400 0 .5A7 7 0 1 1 12.200 2.200L13.500.4c.4-.4 1-.1 1 .4z"/></svg><svg style="left:86px;top:11.2px;width:19px;height:17px" viewBox="0 0 15 13.400"><circle cx="7.5" cy="4.6" r="2.5"/><path d="M3.4 13.4c-.9 0-1.5-.6-1.5-1.5 0-2.300.9-4.200 2.700-4.200.8.800 1.800 1.200 2.900 1.200s2.100-.4 2.900-1.200c1.800 0 2.700 1.900 2.700 4.200 0 .9-.6 1.500-1.500 1.500z"/><circle cx="2.9" cy="3.000" r="1.750"/><circle cx="12.100" cy="3.000" r="1.750"/><path d="M.2 7.300C.2 5.800.8 5 1.700 5c.5.400 1.200.600 1.900.500A3.500 3.500 0 0 0 4 7.200c-.9.100-1.500.600-1.900 1.200H1.200C.6 8.400.2 8 .2 7.300zM14.800 7.300c0-1.500-.6-2.300-1.500-2.300-.5.400-1.200.600-1.900.500a3.500 3.500 0 0 1-.4 1.700c.9.100 1.500.600 1.900 1.200h.9c.6 0 1-.4 1-1.100z"/></svg><svg style="left:110.2px;top:8.9px;width:23px;height:23px" viewBox="0 0 23 23"><path fill-rule="evenodd" d="M11.500 0a11.500 11.500 0 1 1 0 23 11.500 11.500 0 0 1 0-23zM9.500 3v3.300h4V3zM8 8.600v2.400h2v6H8v2.600h7.400V17h-2V8.600z"/></svg></span></td></tr></tbody></table>
</body></html>
